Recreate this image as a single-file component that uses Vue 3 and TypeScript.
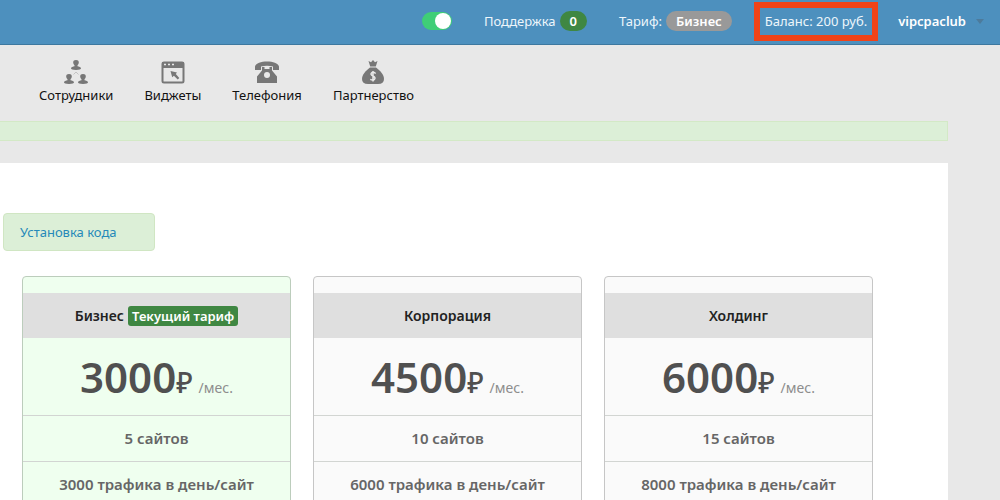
<script setup lang="ts">
import { ref } from 'vue'

interface Plan {
  name: string
  price: string
  current: boolean
  features: string[]
}

const online = ref(true)

const plans: Plan[] = [
  { name: 'Бизнес', price: '3000', current: true, features: ['5 сайтов', '3000 трафика в день/сайт'] },
  { name: 'Корпорация', price: '4500', current: false, features: ['10 сайтов', '6000 трафика в день/сайт'] },
  { name: 'Холдинг', price: '6000', current: false, features: ['15 сайтов', '8000 трафика в день/сайт'] },
]
</script>

<template>
  <div class="page">
    <header class="topbar">
      <input v-model="online" class="switch" type="checkbox" role="switch" aria-label="Онлайн" />
      <a class="support" href="#">Поддержка <span class="pill green">0</span></a>
      <a class="tariff" href="#">Тариф: <span class="pill grey">Бизнес</span></a>
      <a class="balance" href="#">Баланс: 200 руб.</a>
      <button class="user" type="button">vipcpaclub <span class="caret"></span></button>
    </header>

    <nav class="menu">
      <a href="#">
        <svg viewBox="0 0 26 26" aria-hidden="true">
          <defs>
            <g id="person">
              <path d="M4 0C6.200 0 7 1.200 6.800 2.700C6.700 3.900 6 4.600 5.500 5.200V6.300C7 6.700 9 6.900 9 8.600Q9 10 4 10T-1 8.600C-1 6.900 1 6.700 2.500 6.300V5.200C2 4.600 1.300 3.900 1.200 2.700C1 1.200 1.800 0 4 0Z" />
            </g>
          </defs>
          <use href="#person" x="9" y="1" />
          <use href="#person" x="2" y="15" />
          <use href="#person" x="16" y="15" />
          <path d="M10.500 15.500L13 13l2.500 2.500" fill="none" stroke="#c4c4c4" />
        </svg>
        Сотрудники
      </a>
      <a href="#">
        <svg viewBox="0 0 26 26" aria-hidden="true">
          <rect x="2.500" y="3.500" width="21" height="20" rx="1.500" fill="none" stroke="#777" stroke-width="2" />
          <path d="M2 3h22v6H2z" />
          <path d="M4 5.500h2M8 5.500h2M12 5.500h2" stroke="#e9e9e9" stroke-width="1.500" />
          <path d="M10.500 12l6.500 1.500-1.200 1.500 3.500 4-1.600 1.500-3.800-3.700-1.700 1.500z" />
        </svg>
        Виджеты
      </a>
      <a href="#">
        <svg viewBox="0 0 26 26" aria-hidden="true">
          <path d="M1 7.500C2 4 7 2.500 13 2.500S24 4 25 7.500V11H19V7.500Q13 6 7 7.500V11H1z" />
          <path d="M8 8h2.500v2h5V8H18v3.500l5 6V24H3v-6.500l5-6z" />
          <circle cx="13" cy="16" r="3" fill="#e9e9e9" />
        </svg>
        Телефония
      </a>
      <a href="#">
        <svg viewBox="0 0 26 26" aria-hidden="true">
          <path d="M8.500 2l2.500 1.200L13 1l2 2.200L17.500 2l-1.700 5.500h-5.600z" />
          <path d="M10 8.500h6C20 11.500 24 15.500 24 20q0 5-6 5H8q-6 0-6-5C2 15.500 6 11.500 10 8.500z" />
          <path d="M15.700 14.500Q13 12.500 11.500 14t1.500 3 1.500 3.200-4.200.2M13 12v10.500" fill="none" stroke="#e9e9e9" stroke-width="1.500" />
        </svg>
        Партнерство
      </a>
    </nav>

    <div class="notice"></div>

    <main class="panel">
      <div class="install"><a href="#">Установка кода</a></div>
      <div class="plans">
        <section v-for="plan in plans" :key="plan.name" class="plan" :class="{ current: plan.current }">
          <h2>
            {{ plan.name }}
            <span v-if="plan.current" class="tag">Текущий тариф</span>
          </h2>
          <p class="price">
            <strong>{{ plan.price }}</strong><span class="rub">₽</span><span class="per">/мес.</span>
          </p>
          <ul>
            <li v-for="feature in plan.features" :key="feature">{{ feature }}</li>
          </ul>
        </section>
      </div>
    </main>
  </div>
</template>

<style>
body {
  margin: 0;
  background: #e8e8e8;
}
</style>

<style scoped>
.page {
  height: 100vh;
  overflow: hidden;
  background: #e8e8e8;
  color: #111;
  font-family: "Noto Sans", "Open Sans", sans-serif;
  font-size: 13px;
  line-height: 20px;
}
a {
  color: inherit;
  text-decoration: none;
}
.topbar {
  display: flex;
  align-items: center;
  justify-content: flex-end;
  box-sizing: border-box;
  height: 45px;
  padding: 0 16px 2px 0;
  background: #4d90be;
  border-bottom: 1px solid #3d789f;
  color: #eef6fb;
}
.switch {
  appearance: none;
  display: flex;
  justify-content: flex-end;
  box-sizing: border-box;
  width: 30px;
  height: 18px;
  margin: 0 32px 0 0;
  padding: 1px;
  border-radius: 9px;
  background: #3fce77;
}
.switch::before {
  content: "";
  width: 16px;
  height: 16px;
  border-radius: 50%;
  background: #fff;
}
.switch:not(:checked) {
  justify-content: flex-start;
  background: #999;
}
.support,
.tariff {
  display: flex;
  align-items: center;
  gap: 4px;
}
.support {
  margin-right: 32px;
}
.tariff {
  margin-right: 22px;
}
.pill {
  border-radius: 10px;
  color: #fff;
  font-weight: 600;
}
.green {
  padding: 0 10px;
  background: #3f8742;
}
.grey {
  padding: 0 10px;
  background: #999;
}
.balance {
  padding: 4px 5px 5px;
  border: 6px solid #f04318;
  line-height: 18px;
}
.user {
  display: flex;
  align-items: center;
  gap: 10px;
  margin-left: 20px;
  padding: 0;
  border: 0;
  background: none;
  color: #fff;
  font: inherit;
  font-weight: 600;
}
.caret {
  border: 4px solid transparent;
  border-top: 5px solid #4d7b9c;
  border-bottom: 0;
}
.menu {
  display: flex;
  gap: 31px;
  padding: 14px 0 15px 39px;
}
.menu a {
  display: flex;
  flex-direction: column;
  align-items: center;
  line-height: 21px;
}
.menu svg {
  width: 26px;
  height: 26px;
  fill: #777;
}
.notice {
  box-sizing: border-box;
  height: 20px;
  margin-right: 52px;
  border: 1px solid #d3e9c6;
  border-left: 0;
  background: #dcefd7;
}
.panel {
  min-height: 400px;
  margin: 22px 52px 0 0;
  padding: 50px 75px 0 3px;
  background: #fff;
}
.install {
  box-sizing: border-box;
  width: 152px;
  padding: 8px 15px 8px 16px;
  border: 1px solid #d0e6c3;
  border-radius: 4px;
  background: #dcefd7;
  color: #2689b9;
  line-height: 20px;
  white-space: nowrap;
}
.plans {
  display: grid;
  grid-template-columns: repeat(3, 1fr);
  gap: 22px;
  margin: 25px 0 0 19px;
}
.plan {
  padding-top: 16px;
  border: 1px solid #c6c6c6;
  border-radius: 4px;
  background: #fafafa;
  text-align: center;
}
.plan.current {
  background: #efffef;
  border-color: #bccdbc;
}
h2 {
  display: flex;
  align-items: center;
  justify-content: center;
  gap: 4px;
  height: 45px;
  margin: 0;
  background: #dfdfdf;
  color: #222;
  font-size: 14px;
  font-weight: 600;
}
.tag {
  padding: 0 4px;
  border-radius: 3px;
  background: #3f8742;
  color: #fff;
  font-size: 13px;
}
.price {
  display: flex;
  align-items: baseline;
  justify-content: center;
  height: 77px;
  margin: 0;
  color: #505050;
  line-height: 77px;
}
.price strong {
  font-size: 42px;
  font-weight: 600;
}
.rub {
  font-size: 28px;
  font-weight: 500;
}
.per {
  margin-left: 6px;
  color: #8d8d8d;
  font-size: 14px;
}
ul {
  margin: 0;
  padding: 0;
  list-style: none;
}
li {
  padding: 12px 0 13px;
  border-top: 1px solid #d2d5d2;
  color: #666;
  font-size: 15px;
  font-weight: 600;
}
</style>
